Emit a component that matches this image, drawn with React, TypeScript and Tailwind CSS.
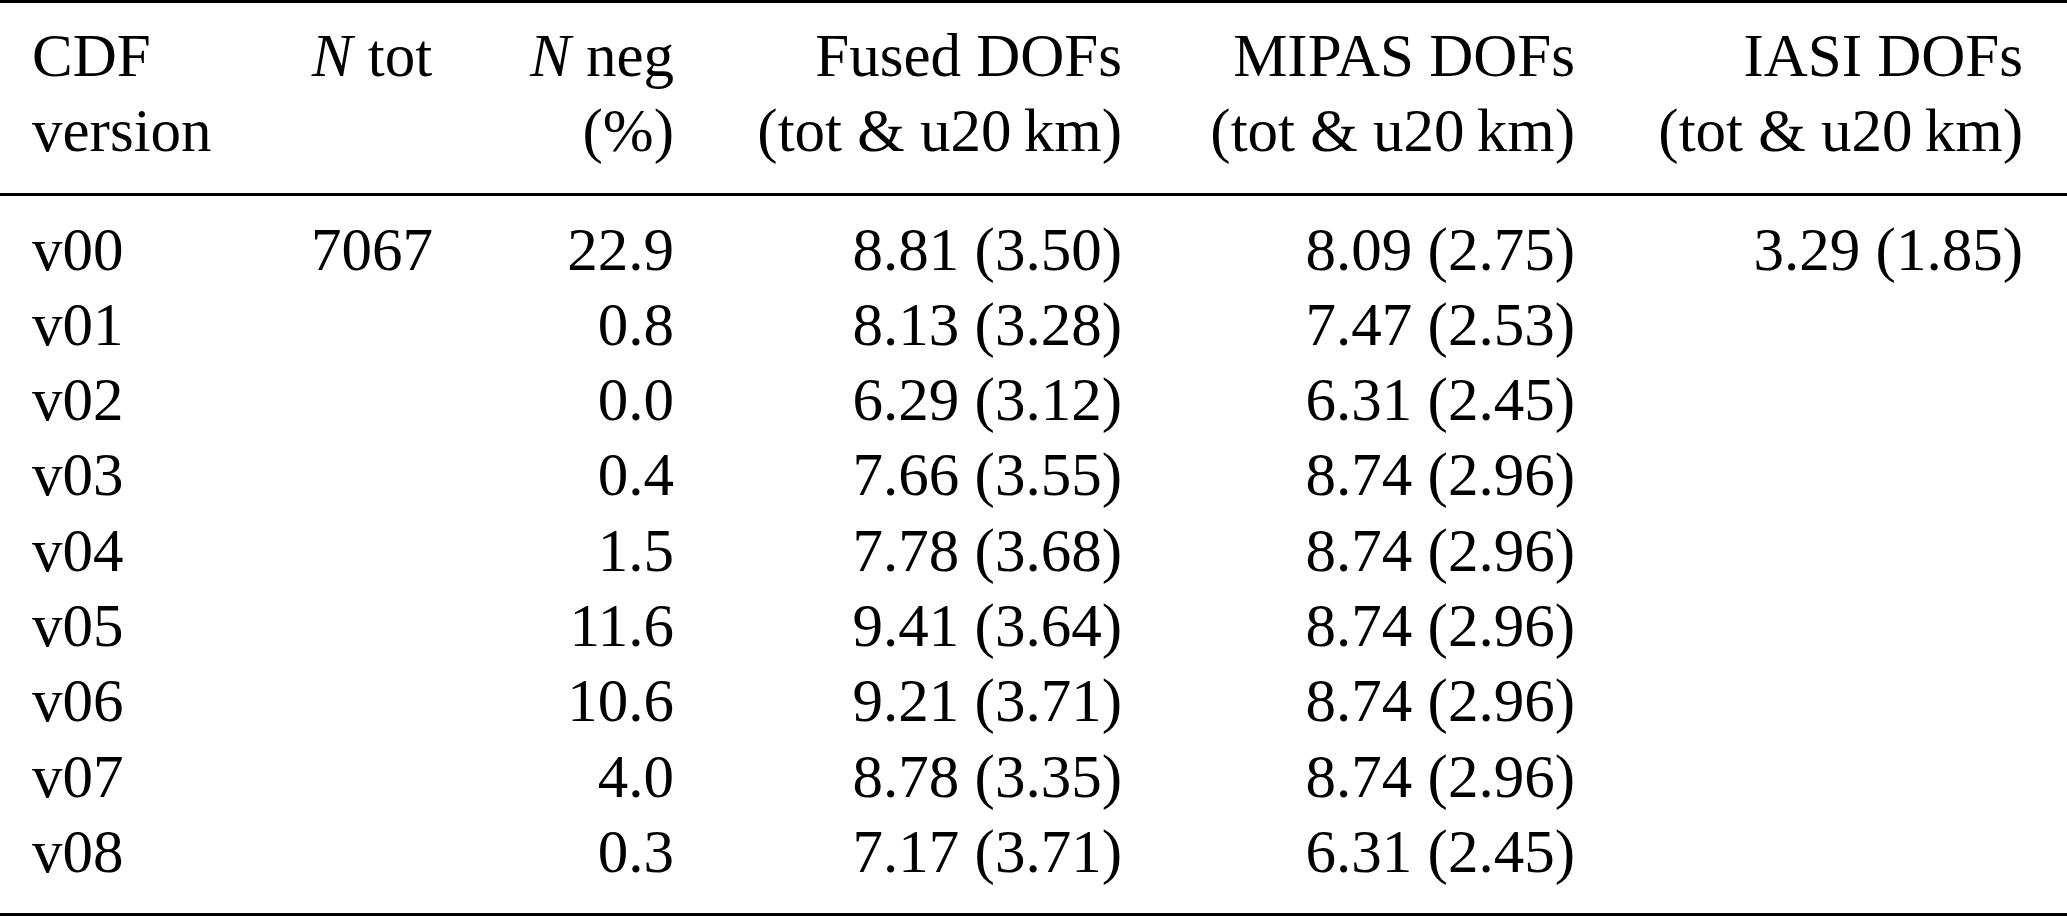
import React from "react";

const rows: [string, string, string, string, string, string][] = [
  ["v00", "7067", "22.9", "8.81 (3.50)", "8.09 (2.75)", "3.29 (1.85)"],
  ["v01", "", "0.8", "8.13 (3.28)", "7.47 (2.53)", ""],
  ["v02", "", "0.0", "6.29 (3.12)", "6.31 (2.45)", ""],
  ["v03", "", "0.4", "7.66 (3.55)", "8.74 (2.96)", ""],
  ["v04", "", "1.5", "7.78 (3.68)", "8.74 (2.96)", ""],
  ["v05", "", "11.6", "9.41 (3.64)", "8.74 (2.96)", ""],
  ["v06", "", "10.6", "9.21 (3.71)", "8.74 (2.96)", ""],
  ["v07", "", "4.0", "8.78 (3.35)", "8.74 (2.96)", ""],
  ["v08", "", "0.3", "7.17 (3.71)", "6.31 (2.45)", ""],
];

const grid = "grid grid-cols-[240px_200px_202px_448px_453px_448px]";

export default function App() {
  return (
    <div className="w-[2067px] h-[917px] bg-white text-black font-['Liberation_Serif',serif] text-[61px] leading-[75.3px] whitespace-nowrap">
      <div className="border-t-[3px] border-b-[3px] border-black pt-[15px] pb-[24px] pl-[32px]">
        <div className={grid}>
          <div className="flex flex-col text-left">
            <span>CDF</span>
            <span>version</span>
          </div>
          <div className="text-center">
            <i>N</i> tot
          </div>
          <div className="flex flex-col text-right">
            <span>
              <i>N</i> neg
            </span>
            <span>(%)</span>
          </div>
          <div className="flex flex-col text-right">
            <span>Fused DOFs</span>
            <span>(tot &amp; u20{"\u2009"}km)</span>
          </div>
          <div className="flex flex-col text-right">
            <span>MIPAS DOFs</span>
            <span>(tot &amp; u20{"\u2009"}km)</span>
          </div>
          <div className="flex flex-col text-right">
            <span>IASI DOFs</span>
            <span>(tot &amp; u20{"\u2009"}km)</span>
          </div>
        </div>
      </div>
      <div className="border-b-[3px] border-black pt-[16px] pb-[24px] pl-[32px]">
        {rows.map((r) => (
          <div key={r[0]} className={grid}>
            <div className="text-left">{r[0]}</div>
            <div className="text-center">{r[1]}</div>
            <div className="text-right">{r[2]}</div>
            <div className="text-right">{r[3]}</div>
            <div className="text-right">{r[4]}</div>
            <div className="text-right">{r[5]}</div>
          </div>
        ))}
      </div>
    </div>
  );
}
